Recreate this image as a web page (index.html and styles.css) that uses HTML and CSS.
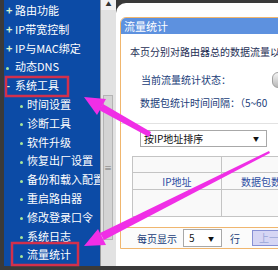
FILE: index.html
```html
<!DOCTYPE html>
<html lang="zh-CN">
<head>
  <meta charset="UTF-8">
  <title>流量统计</title>
  <link rel="stylesheet" href="styles.css">
</head>
<body>

  <div class="frame">
    <div class="sidebar">
      <div class="top-item"><span class="plus">+</span>路由功能</div>
      <div class="top-item"><span class="plus">+</span>IP带宽控制</div>
      <div class="top-item"><span class="plus">+</span>IP与MAC绑定</div>
      <div class="top-item"><span class="plus"><i class="dot"></i></span>动态DNS</div>
      <div class="top-item"><span class="plus">-</span>系统工具</div>
      <div class="sub-item"><i class="dot"></i>时间设置</div>
      <div class="sub-item"><i class="dot"></i>诊断工具</div>
      <div class="sub-item"><i class="dot"></i>软件升级</div>
      <div class="sub-item"><i class="dot"></i>恢复出厂设置</div>
      <div class="sub-item"><i class="dot"></i>备份和载入配置</div>
      <div class="sub-item"><i class="dot"></i>重启路由器</div>
      <div class="sub-item"><i class="dot"></i>修改登录口令</div>
      <div class="sub-item"><i class="dot"></i>系统日志</div>
      <div class="sub-item"><i class="dot"></i>流量统计</div>
    </div>

    <div class="scroll">
      <div class="scroll-up">▲</div>
      <div class="thumb"><span class="grip">≡</span></div>
    </div>

    <div class="main">
      <div class="panel">
        <div class="panel-head">流量统计</div>
        <div class="intro">本页分别对路由器总的数据流量以</div>
        <div class="row status">
          <span class="label">当前流量统计状态：</span>
          <span class="toggle"></span>
        </div>
        <div class="row interval">数据包统计时间间隔：（5~60</div>
        <div class="divider"></div>
        <div class="select sort">按IP地址排序<span class="arrow">▼</span></div>

        <table class="stats">
          <tr class="r1">
            <td class="c1"></td>
            <td class="c2 total">总</td>
          </tr>
          <tr class="r2">
            <td class="c1">IP地址</td>
            <td class="c2">数据包数</td>
          </tr>
          <tr class="r3">
            <td class="c1"></td>
            <td class="c2"></td>
          </tr>
        </table>

        <div class="pager">
          <span>每页显示</span>
          <div class="select small">5<span class="arrow">▼</span></div>
          <span>行</span>
          <span class="btn">上一页</span>
        </div>
      </div>
    </div>
  </div>

  <!-- annotation overlay -->
  <svg class="marks" width="278" height="270" viewBox="0 0 278 270">
    <rect x="6" y="77" width="62" height="19" fill="none" stroke="#d3304c" stroke-width="2.5"/>
    <rect x="12" y="243" width="66" height="22" fill="none" stroke="#d3304c" stroke-width="2.5"/>
    <polygon fill="#f02ee6" points="84,97 106,99 97,115"/>
    <polygon fill="#f02ee6" points="103,104 99,110 149,137 151,132"/>
    <polygon fill="#f02ee6" points="84,246 98,229 106,245"/>
    <polygon fill="#f02ee6" points="100,233 104,240 270,153 269,151"/>
  </svg>

</body>
</html>
```

FILE: styles.css
```css
body {
  margin: 0;
  width: 278px;
  height: 270px;
  overflow: hidden;
  background-color: #3a3a3a;
  font-family: "Noto Sans CJK SC", "DejaVu Sans", sans-serif;
  position: relative;
}

.frame {
  display: flex;
  height: 266px;
  padding-left: 4px;
}

.sidebar {
  width: 96px;
  flex: none;
  background-color: #0c4ba6;
  color: white;
  font-size: 11px;
  line-height: 18.8px;
  padding-top: 1px;
  white-space: nowrap;
  overflow: hidden;
}

.top-item {
  padding-left: 2px;
}

.plus {
  display: inline-block;
  width: 9px;
  color: #d8f4d0;
  font-weight: bold;
}

.sub-item {
  padding-left: 16px;
}

.dot {
  display: inline-block;
  width: 3px;
  height: 3px;
  border-radius: 50%;
  background-color: #a8e89c;
  margin-right: 4px;
  vertical-align: middle;
}

.scroll {
  width: 15px;
  flex: none;
  background-color: #e2e2e2;
  border-left: 1px solid #9a9a9a;
}

.scroll-up {
  height: 10px;
  font-size: 6px;
  line-height: 8px;
  text-align: center;
  color: #333;
  background-color: #f2f2f2;
}

.thumb {
  margin: 85px 0 0 2px;
  width: 10px;
  height: 145px;
  background-color: #d4d4d4;
  border: 1px solid #b4b4b4;
  box-sizing: border-box;
  display: flex;
  align-items: center;
  justify-content: center;
}

.grip {
  font-size: 8px;
  color: #777;
}

.main {
  flex: 1;
  margin-top: 3px;
  background-color: white;
  border-top-left-radius: 10px;
  padding: 14px 0 0 4px;
  overflow: hidden;
}

.panel {
  width: 300px;
  border: 1px solid #f0b66e;
  border-radius: 6px 6px 0 0;
  font-size: 10px;
  color: #1e2e55;
  white-space: nowrap;
}

.panel-head {
  height: 16px;
  line-height: 16px;
  background-color: #5d91df;
  color: white;
  font-size: 11px;
  padding-left: 3px;
  border-radius: 5px 5px 0 0;
}

.intro {
  margin-top: 10px;
  padding-left: 9px;
  line-height: 16px;
}

.row {
  line-height: 16px;
  padding-left: 20px;
  color: #203c78;
}

.status {
  margin-top: 12px;
  display: flex;
  align-items: center;
}

.status .label {
  width: 131px;
}

.toggle {
  width: 12px;
  height: 14px;
  border-radius: 6px 0 0 6px;
  background: linear-gradient(#f4f4f4, #b8b8b8);
  border: 1px solid #a0a0a0;
}

.interval {
  margin-top: 7px;
  padding-left: 19px;
}

.divider {
  margin-top: 12px;
  height: 1px;
  background-color: #e2e2e2;
}

.select {
  position: relative;
  background: white;
  border: 1px solid #a8a8a8;
  box-sizing: border-box;
  color: #111;
}

.arrow {
  position: absolute;
  right: 7px;
  top: 0;
  font-size: 6px;
}

.sort {
  margin: 6px 0 0 19px;
  width: 127px;
  height: 17px;
  line-height: 15px;
  padding-left: 3px;
}

.sort .arrow {
  line-height: 16px;
}

.stats {
  margin: 9px 0 0 11px;
  border-collapse: collapse;
  color: #2c4ca2;
}

.stats td {
  border: 1px solid #c4c4c4;
  padding: 0;
  background-color: #f9f9f9;
}

.stats .c1 {
  width: 88px;
  text-align: center;
}

.stats .c2 {
  width: 70px;
  text-align: center;
}

.stats .total {
  text-align: right;
  padding-right: 8px;
}

.r1 td {
  height: 15px;
}

.r2 td {
  height: 16px;
}

.r3 td {
  height: 26px;
}

.pager {
  margin-top: 10px;
  border-top: 1px solid #f0b66e;
  height: 20px;
  background-color: #fbfbfb;
  display: flex;
  align-items: center;
  padding-left: 16px;
  color: #203c78;
}

.small {
  margin: 0 8px 0 6px;
  width: 39px;
  height: 18px;
  line-height: 15px;
  padding-left: 5px;
}

.small .arrow {
  line-height: 17px;
}

.btn {
  margin-left: 12px;
  padding: 0 6px;
  height: 14px;
  line-height: 14px;
  background-color: #d6d6f4;
  border: 1px solid #8790d4;
  color: #9aa6d8;
}

.marks {
  position: absolute;
  left: 0;
  top: 0;
}
```
